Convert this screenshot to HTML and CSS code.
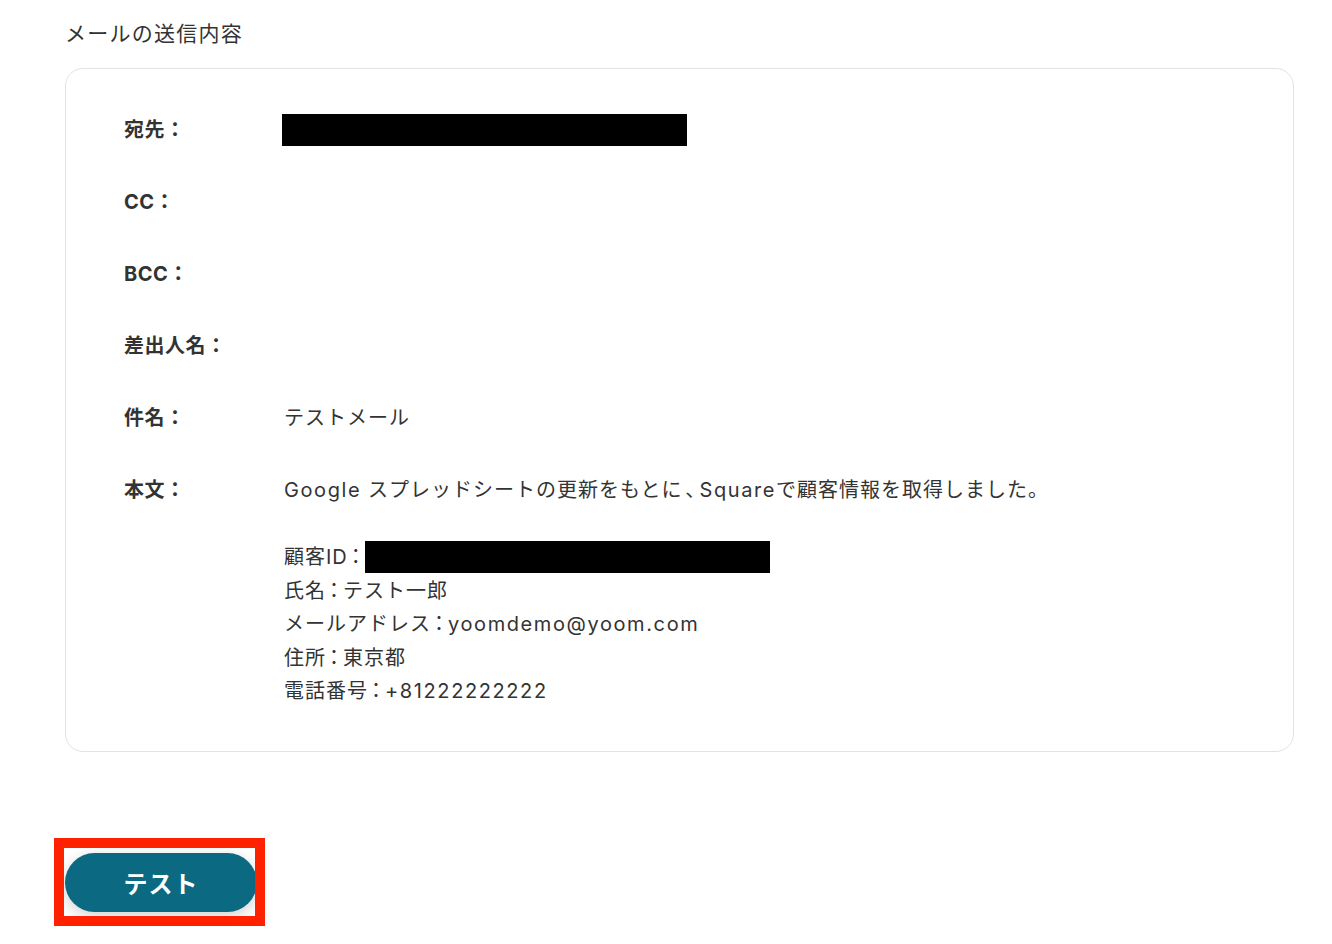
FILE: index.html
```html
<!DOCTYPE html>
<html>
	<head>
		<meta charset="UTF-8">
		<title>メールの送信内容</title>
		<link rel="stylesheet" href="styles.css">
	</head>
	<body>
		<div class="page">
			<h2 class="title">メールの送信内容</h2>
			<div class="card">
				<div class="row">
					<div class="label">宛先：</div>
					<div class="value"><span class="mask mask-to"></span></div>
				</div>
				<div class="row">
					<div class="label">CC：</div>
					<div class="value"></div>
				</div>
				<div class="row">
					<div class="label">BCC：</div>
					<div class="value"></div>
				</div>
				<div class="row">
					<div class="label">差出人名：</div>
					<div class="value"></div>
				</div>
				<div class="row">
					<div class="label">件名：</div>
					<div class="value">テストメール</div>
				</div>
				<div class="row">
					<div class="label">本文：</div>
					<div class="value">
						<p><span class="en">Google</span> スプレッドシートの更新をもとに<span class="colon">、</span><span class="en">Square</span>で顧客情報を取得しました。</p>
						<p>&nbsp;</p>
						<p>顧客ID<span class="colon">：</span><span class="mask mask-id"></span></p>
						<p>氏名<span class="colon">：</span>テスト一郎</p>
						<p>メールアドレス<span class="colon">：</span><span class="en">yoomdemo@yoom.com</span></p>
						<p>住所<span class="colon">：</span>東京都</p>
						<p>電話番号<span class="colon">：</span><span class="en">+81222222222</span></p>
					</div>
				</div>
			</div>
			<div class="actions">
				<div class="mark">
					<button type="button" class="btn">テスト</button>
					<span class="highlight"></span>
				</div>
			</div>
		</div>
	</body>
</html>
```

FILE: styles.css
```css
body{
	margin: 0;
	background: #fff;
	color: #333;
	font-family: "Inter", "Noto Sans CJK JP", sans-serif;
}
.page{
	width: 1229px;
	padding: 0 0 32px 65px;
}
.title{
	margin: 19px 0 19px;
	font-size: 21px;
	line-height: 30px;
	font-weight: 400;
	letter-spacing: 1.25px;
	color: #333;
}
.card{
	border: 1px solid #e3e3e3;
	border-radius: 18px;
	padding: 45px 58px 42px;
	display: flex;
	flex-direction: column;
	gap: 38.5px;
}
.row{
	display: grid;
	grid-template-columns: 160px 1fr;
	font-size: 20px;
	line-height: 33.5px;
	letter-spacing: 1px;
	min-height: 33.5px;
}
.label{
	font-weight: 700;
	letter-spacing: .5px;
}
.value p{
	margin: 0;
}
.en{
	letter-spacing: 1.6px;
}
.colon{
	font-feature-settings: "palt";
	margin: 0 3px;
}
.mask{
	display: inline-block;
	height: 32px;
	width: 405px;
	background: #000;
	vertical-align: middle;
}
.mask-to{
	margin: -3px 0 0 -2px;
}
.mask-id{
	margin-top: -4px;
}
.actions{
	padding-top: 101px;
}
.mark{
	position: relative;
	display: inline-block;
}
.btn{
	display: block;
	width: 192px;
	height: 59px;
	border: none;
	border-radius: 30px;
	background: #0b6a82;
	color: #fff;
	font-family: "Inter", "Noto Sans CJK JP", sans-serif;
	font-size: 24px;
	font-weight: 700;
	letter-spacing: 1px;
	box-shadow: 0 4px 14px rgba(0,0,0,.18);
}
.highlight{
	position: absolute;
	left: -11px;
	top: -15px;
	width: 191px;
	height: 68px;
	border: 10px solid #ff2200;
}
```
